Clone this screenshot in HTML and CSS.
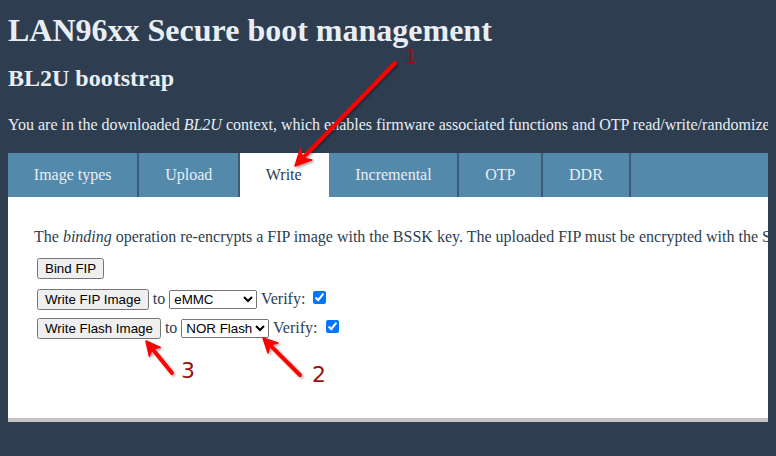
FILE: index.html
```html
<!DOCTYPE html>
<html lang="en">
<head>
<meta charset="utf-8">
<title>LAN96xx Secure boot management</title>
<link rel="stylesheet" href="styles.css">
</head>
<body>
<div class="page">
  <h1 class="title">LAN96xx Secure boot management</h1>
  <h2 class="subtitle">BL2U bootstrap</h2>
  <p class="intro">You are in the downloaded <em>BL2U</em> context, which enables firmware associated functions and OTP read/write/randomize operations.</p>

  <div class="tabs">
    <div class="tab">Image types</div>
    <div class="tab">Upload</div>
    <div class="tab active">Write</div>
    <div class="tab">Incremental</div>
    <div class="tab">OTP</div>
    <div class="tab">DDR</div>
    <div class="tab-fill"></div>
  </div>

  <div class="panel">
    <p class="desc">The <em>binding</em> operation re-encrypts a FIP image with the BSSK key. The uploaded FIP must be encrypted with the SSK key.</p>
    <div class="row"><button class="btn">Bind FIP</button></div>
    <div class="row"><button class="btn">Write FIP Image</button> to <select class="sel"><option>eMMC</option><option>NOR Flash</option></select> Verify: <input class="chk" type="checkbox" checked></div>
    <div class="row"><button class="btn">Write Flash Image</button> to <select class="sel"><option>NOR Flash</option><option>eMMC</option></select> Verify: <input class="chk" type="checkbox" checked></div>
  </div>
</div>

<svg class="notes" width="776" height="456" viewBox="0 0 776 456" aria-hidden="true">
  <defs>
    <filter id="shadow" x="-20%" y="-20%" width="140%" height="140%">
      <feDropShadow dx="1.5" dy="1.5" stdDeviation="1.2" flood-color="#000" flood-opacity="0.35"/>
    </filter>
  </defs>
  <g filter="url(#shadow)" fill="#ff0000" stroke="#ff0000">
    <line x1="395" y1="63" x2="302.7" y2="158.1" stroke-width="4" stroke-linecap="round"/>
    <polygon points="295,166 311.8,160.1 302.7,158.1 300.4,148.9" stroke-width="1.5" stroke-linejoin="round"/>
    <line x1="300" y1="375" x2="270.1" y2="345.1" stroke-width="4" stroke-linecap="round"/>
    <polygon points="263,338 277.9,343 270.1,345.1 268,352.9" stroke-width="1.5" stroke-linejoin="round"/>
    <line x1="172" y1="373" x2="152.3" y2="348.8" stroke-width="4" stroke-linecap="round"/>
    <polygon points="146,341 160.2,347.5 152.3,348.8 149.4,356.3" stroke-width="1.5" stroke-linejoin="round"/>
  </g>
  <text class="num" x="405" y="63" font-size="19">1</text>
  <text class="num" x="312" y="382" font-size="22">2</text>
  <text class="num" x="181" y="378" font-size="22">3</text>
</svg>
</body>
</html>
```

FILE: styles.css
```css
html, body {
  overflow: hidden;
}
body {
  margin: 8px;
  background: #2e3d50;
  color: #e8eef3;
  font-family: "Liberation Serif", "Times New Roman", serif;
  font-size: 16px;
}
.page {
  width: 1100px;
}
.title {
  font-size: 32px;
  font-weight: bold;
  margin: 4px 0 0;
}
.subtitle {
  font-size: 24px;
  font-weight: bold;
  margin: 16px 0 0;
}
.intro {
  margin: 24px 0 0;
  white-space: nowrap;
}
.tabs {
  display: flex;
  margin-top: 19px;
  height: 44px;
  background: #5389ab;
}
.tab {
  display: flex;
  align-items: center;
  padding: 0 25.8px;
  border-right: 2px solid #3b5b77;
  color: #e8eef3;
  white-space: nowrap;
}
.tab.active {
  background: #ffffff;
  color: #2e3d50;
  border-right-color: #ffffff;
}
.tab-fill {
  flex: 1;
}
.panel {
  background: #ffffff;
  color: #2e3d50;
  padding: 31px 26px 80.5px;
  border-bottom: 4px solid #c4c4c4;
}
.desc {
  margin: 0 0 12px;
  white-space: nowrap;
}
.row {
  height: 20px;
  margin-top: 9.5px;
  white-space: nowrap;
}
.row:first-of-type {
  margin-top: 0;
}
.btn {
  font-family: "Liberation Sans", Arial, sans-serif;
  font-size: 13.333px;
  margin-left: 3px;
}
.sel {
  font-family: "Liberation Sans", Arial, sans-serif;
  font-size: 13.333px;
  width: 88px;
}
.chk {
  margin: 3px 3px 3px 4px;
}
.notes {
  position: absolute;
  left: 0;
  top: 0;
  pointer-events: none;
}
.num {
  fill: #9a1010;
  font-family: "DejaVu Sans", sans-serif;
}
```
